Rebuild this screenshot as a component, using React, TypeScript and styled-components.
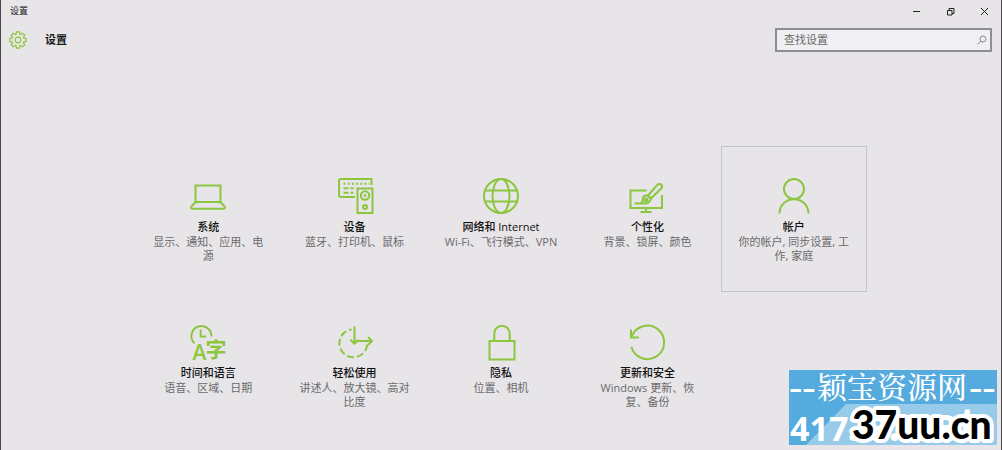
import React from "react";
import styled, { createGlobalStyle } from "styled-components";

const GREEN = "#8cc63f";

const GlobalStyle = createGlobalStyle`
  * { box-sizing: border-box; }
  body {
    margin: 0;
    background: #e7e5e8;
    color: #1a1a1a;
    font-family: "Open Sans", "Noto Sans CJK SC", sans-serif;
    font-size: 11px;
    line-height: 14px;
  }
`;

const Window = styled.div`
  position: relative;
  display: flex;
  flex-direction: column;
  min-height: 100vh;
  border: solid #4c4a4e;
  border-width: 0 1px;
`;

const TitleBar = styled.div`
  display: flex;
  align-items: center;
  justify-content: space-between;
  height: 22px;
  padding-left: 9px;
  font-size: 9px;
`;

const WindowControls = styled.div`
  display: flex;
`;

const ControlButton = styled.button`
  display: flex;
  align-items: center;
  justify-content: center;
  width: 34px;
  height: 22px;
  padding: 0;
  border: 0;
  background: transparent;
  color: #222;
`;

const Header = styled.header`
  display: flex;
  align-items: center;
  justify-content: space-between;
  padding: 6px 9px 0 8px;
`;

const Heading = styled.div`
  display: flex;
  align-items: center;
  gap: 18px;
`;

const PageTitle = styled.h1`
  margin: 0;
  font-size: 11px;
  font-weight: 700;
`;

const SearchBox = styled.label`
  display: flex;
  align-items: center;
  width: 217px;
  height: 24px;
  padding: 0 3px 0 7px;
  border: 2px solid #8f8d92;
  background: #f0eff1;
`;

const SearchInput = styled.input`
  flex: 1;
  min-width: 0;
  padding: 0;
  border: 0;
  outline: 0;
  background: transparent;
  font: inherit;
  &::placeholder { color: #6a696c; opacity: 1; }
`;

const Main = styled.main`
  padding: 94px 16px 12px;
`;

const Grid = styled.nav`
  display: grid;
  grid-template-columns: repeat(5, 1fr);
  grid-auto-rows: minmax(146px, auto);
  max-width: 732px;
  margin: 0 auto;
`;

const Tile = styled.a<{ $active?: boolean }>`
  display: flex;
  flex-direction: column;
  align-items: center;
  padding: 31px 15px 0;
  border: 1px solid ${(p) => (p.$active ? "#c4c3c7" : "transparent")};
  color: inherit;
  text-align: center;
  text-decoration: none;
`;

const TileIcon = styled.svg`
  width: 36px;
  height: 36px;
  margin-bottom: 6px;
  overflow: visible;
  fill: none;
  stroke: ${GREEN};
  stroke-width: 2;
`;

const TileTitle = styled.span`
  margin-bottom: 1px;
  color: #111;
  font-weight: 500;
`;

const TileText = styled.span`
  color: #6b6a6d;
`;

const Glyph = styled.text`
  fill: ${GREEN};
  stroke: none;
  font-family: "Open Sans", "Noto Sans CJK SC", sans-serif;
  font-weight: 600;
`;

const Watermark = styled.svg`
  position: absolute;
  right: 4px;
  top: 370px;
  width: 208px;
  height: 75px;
  overflow: visible;
`;

const icons = {
  system: (
    <>
      <path d="M5.5 24V7.5h25V24" />
      <path d="M5.5 24h25l4.2 4.6c.6.9.2 2.1-.9 2.1H2.2c-1.1 0-1.5-1.2-.9-2.1z" />
    </>
  ),
  devices: (
    <>
      <path d="M18 19H4a2 2 0 0 1-2-2V3a2 2 0 0 1 2-2h30.5v6" />
      <path d="M6.5 5.7h26" strokeDasharray="2 2.2" />
      <path d="M6.5 10.3h5M13.500 10.3h3M6.5 14.7h5M13.5 14.7h3" />
      <rect x="20.5" y="10.5" width="15" height="24.5" />
      <circle cx="28" cy="17.5" r="4.2" />
      <circle cx="28" cy="17.5" r=".6" />
      <circle cx="28" cy="29" r="2" />
    </>
  ),
  network: (
    <>
      <circle cx="18" cy="18" r="17" />
      <ellipse cx="18" cy="18" rx="8.5" ry="17" />
      <path d="M2 12.5h32M2 23.5h32" />
    </>
  ),
  personal: (
    <>
      <path d="M17.5 12.5H1.500v17.5h31.500V17M17 30v4M11.5 34h11" />
      <path d="M19 17.5 28.6 6.7a2.500 2.500 0 0 1 3.700 3.500L22 20.5z" />
      <path d="M5.5 25.5h8c5 .5 8-1.5 8.3-4.8L18.5 17.5c-3.500-.3-5.500 2-4.700 4.300.1 1.500-.6 2.700-2 3.500" />
      <circle cx="17" cy="22" r="1.5" />
    </>
  ),
  accounts: (
    <>
      <circle cx="18" cy="11" r="10" />
      <path d="M3.500 35.5C3.5 27 10 21.2 18 21.2S32.5 27 32.5 35.5" />
    </>
  ),
  time: (
    <>
      <path d="M4.5 19.3A10 10 0 1 1 21.4 12.5" />
      <path d="M10.7 5.5v7h5.5" />
      <Glyph x="2.5" y="35.5" fontSize="21">A</Glyph>
      <Glyph x="15.500" y="32.5" fontSize="21">字</Glyph>
    </>
  ),
  ease: (
    <>
      <path d="M30.3 20.5A14 14 0 1 1 14.5 5.4" strokeDasharray="7 3" />
      <path d="M17.5 2.5v17M13.5 15.7l4 4 4-4M21.5 17H35M31 13l4 4-4 4" />
    </>
  ),
  privacy: (
    <>
      <rect x="6.5" y="17" width="25" height="18.5" />
      <path d="M11.3 17V9.500a7.700 7.700 0 0 1 15.400 0V17" />
    </>
  ),
  update: (
    <>
      <path d="M2.3 22.700A16.700 16.700 0 1 0 2.800 12.500" />
      <path d="M2 5.5v8h8" />
    </>
  ),
};

interface Item {
  icon: keyof typeof icons;
  title: string;
  text: string;
  active?: boolean;
}

const items: Item[] = [
  { icon: "system", title: "系统", text: "显示、通知、应用、电源" },
  { icon: "devices", title: "设备", text: "蓝牙、打印机、鼠标" },
  { icon: "network", title: "网络和 Internet", text: "Wi-Fi、飞行模式、VPN" },
  { icon: "personal", title: "个性化", text: "背景、锁屏、颜色" },
  { icon: "accounts", title: "帐户", text: "你的帐户, 同步设置, 工作, 家庭", active: true },
  { icon: "time", title: "时间和语言", text: "语音、区域、日期" },
  { icon: "ease", title: "轻松使用", text: "讲述人、放大镜、高对比度" },
  { icon: "privacy", title: "隐私", text: "位置、相机" },
  { icon: "update", title: "更新和安全", text: "Windows 更新、恢复、备份" },
];

// Eight-toothed cog outline: each tooth is two outer points followed by two root points.
const gearPath =
  Array.from({ length: 8 }, (_, i) =>
    [[-0.2, 8.3], [0.2, 8.3], [0.27, 6.2], [0.52, 6.2]]
      .map(([offset, radius], j) => {
        const angle = (i * Math.PI) / 4 + offset;
        const x = (9 + radius * Math.sin(angle)).toFixed(2);
        const y = (9 - radius * Math.cos(angle)).toFixed(2);
        return `${i + j === 0 ? "M" : "L"}${x} ${y}`;
      })
      .join("")
  ).join("") + "Z";

export default function App() {
  return (
    <>
      <GlobalStyle />
      <Window>
        <TitleBar>
          <span>设置</span>
          <WindowControls>
            <ControlButton aria-label="最小化">
              <svg width="9" height="9" stroke="currentColor"><path d="M1 4.5h7" /></svg>
            </ControlButton>
            <ControlButton aria-label="还原">
              <svg width="9" height="9" fill="none" stroke="currentColor">
                <path d="M1.5 3.5h4.500v4.500h-4.500zM3 3.5V1.5h5v5H6" />
              </svg>
            </ControlButton>
            <ControlButton aria-label="关闭">
              <svg width="9" height="9" stroke="currentColor"><path d="M1 1l7 7M8 1L1 8" /></svg>
            </ControlButton>
          </WindowControls>
        </TitleBar>
        <Header>
          <Heading>
            <svg width="18" height="18" fill="none" stroke={GREEN} strokeWidth="1.2" strokeLinejoin="round">
              <path d={gearPath} />
              <circle cx="9" cy="9" r="2.8" />
            </svg>
            <PageTitle>设置</PageTitle>
          </Heading>
          <SearchBox>
            <SearchInput type="text" placeholder="查找设置" aria-label="查找设置" />
            <svg width="10" height="10" fill="none" stroke="#8a888c">
              <circle cx="6" cy="4" r="3" />
              <path d="M4 6.2.7 9.3" />
            </svg>
          </SearchBox>
        </Header>
        <Main>
          <Grid>
            {items.map((item) => (
              <Tile key={item.icon} href="#" $active={item.active}>
                <TileIcon viewBox="0 0 36 36">{icons[item.icon]}</TileIcon>
                <TileTitle>{item.title}</TileTitle>
                <TileText>{item.text}</TileText>
              </Tile>
            ))}
          </Grid>
        </Main>
        <Watermark viewBox="0 0 208 75">
          <rect width="208" height="75" fill="#55abdd" />
          <path d="M17 75 57 34H208V75z" fill="#97cbe9" />
          <g fill="#fff">
            <g fontFamily="Liberation Serif, serif" fontSize="40">
              <text x="0" y="30">--</text>
              <text x="180" y="30">--</text>
            </g>
            <text x="28" y="28" fontSize="30" fontWeight="500" fontFamily="Noto Serif CJK SC, Noto Sans CJK SC, serif">颖宝资源网</text>
            <g fontFamily="Open Sans, sans-serif" fontWeight="700">
              <text x="1" y="71" fontSize="34">41738</text>
              <text x="99" y="71" fontSize="46">.net</text>
            </g>
          </g>
          <text
            x="63" y="69" fontSize="39" fontWeight="900"
            fontFamily="Lato, sans-serif"
            fill="#000" stroke="#fff" strokeWidth="8" strokeLinejoin="round" paintOrder="stroke"
          >
            37uu.cn
          </text>
        </Watermark>
      </Window>
    </>
  );
}
